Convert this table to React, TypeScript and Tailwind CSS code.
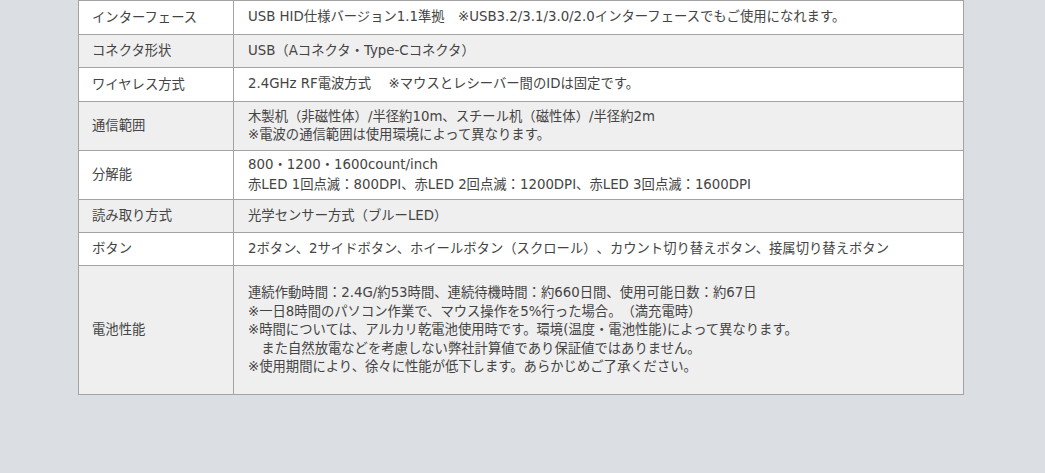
export default function App() {
  const rows = [
    { label: "インターフェース", h: "h-[34px]", bg: "bg-white", lines: ["USB HID仕様バージョン1.1準拠　※USB3.2/3.1/3.0/2.0インターフェースでもご使用になれます。"] },
    { label: "コネクタ形状", h: "h-[33px]", bg: "bg-[#efefef]", lines: ["USB（Aコネクタ・Type-Cコネクタ）"] },
    { label: "ワイヤレス方式", h: "h-[34px]", bg: "bg-white", lines: ["2.4GHz RF電波方式　 ※マウスとレシーバー間のIDは固定です。"] },
    {
      label: "通信範囲",
      h: "h-[49px]",
      bg: "bg-[#efefef]",
      lines: ["木製机（非磁性体）/半径約10m、スチール机（磁性体）/半径約2m", "※電波の通信範囲は使用環境によって異なります。"],
    },
    {
      label: "分解能",
      h: "h-[49px]",
      bg: "bg-white",
      lines: ["800・1200・1600count/inch", "赤LED 1回点滅：800DPI、赤LED 2回点滅：1200DPI、赤LED 3回点滅：1600DPI"],
    },
    { label: "読み取り方式", h: "h-[33px]", bg: "bg-[#efefef]", lines: ["光学センサー方式（ブルーLED）"] },
    { label: "ボタン", h: "h-[33px]", bg: "bg-white", lines: ["2ボタン、2サイドボタン、ホイールボタン（スクロール）、カウント切り替えボタン、接属切り替えボタン"] },
    {
      label: "電池性能",
      h: "h-[129px]",
      bg: "bg-[#efefef]",
      lines: [
        "連続作動時間：2.4G/約53時間、連続待機時間：約660日間、使用可能日数：約67日",
        "※一日8時間のパソコン作業で、マウス操作を5%行った場合。（満充電時）",
        "※時間については、アルカリ乾電池使用時です。環境(温度・電池性能)によって異なります。",
        "　また自然放電などを考慮しない弊社計算値であり保証値ではありません。",
        "※使用期間により、徐々に性能が低下します。あらかじめご了承ください。",
      ],
    },
  ]

  return (
    <div className="w-[1045px] h-[473px] bg-[#dbdee2] font-['DejaVu_Sans','Noto_Sans_CJK_JP',sans-serif] text-[13.33px] text-[#444] [text-spacing-trim:space-all]">
      <div className="ml-[78px] w-[886px] border-x border-t border-[#a3a3a3]">
        {rows.map((row, i) => (
          <div key={i} className={`flex ${row.h} ${row.bg} border-b border-[#a3a3a3]`}>
            <div className="w-[155px] shrink-0 flex items-center pl-[13px] border-r border-[#a3a3a3]">
              {row.label}
            </div>
            <div className="flex-1 flex flex-col justify-center pl-[14px] leading-[18.5px]">
              {row.lines.map((line, j) => (
                <div key={j} className="whitespace-pre">
                  {line.split("：").map((part, k) => (
                    <span key={k}>
                      {k > 0 && <span className="font-['Noto_Sans_CJK_JP',sans-serif]">：</span>}
                      {part}
                    </span>
                  ))}
                </div>
              ))}
            </div>
          </div>
        ))}
      </div>
    </div>
  )
}
